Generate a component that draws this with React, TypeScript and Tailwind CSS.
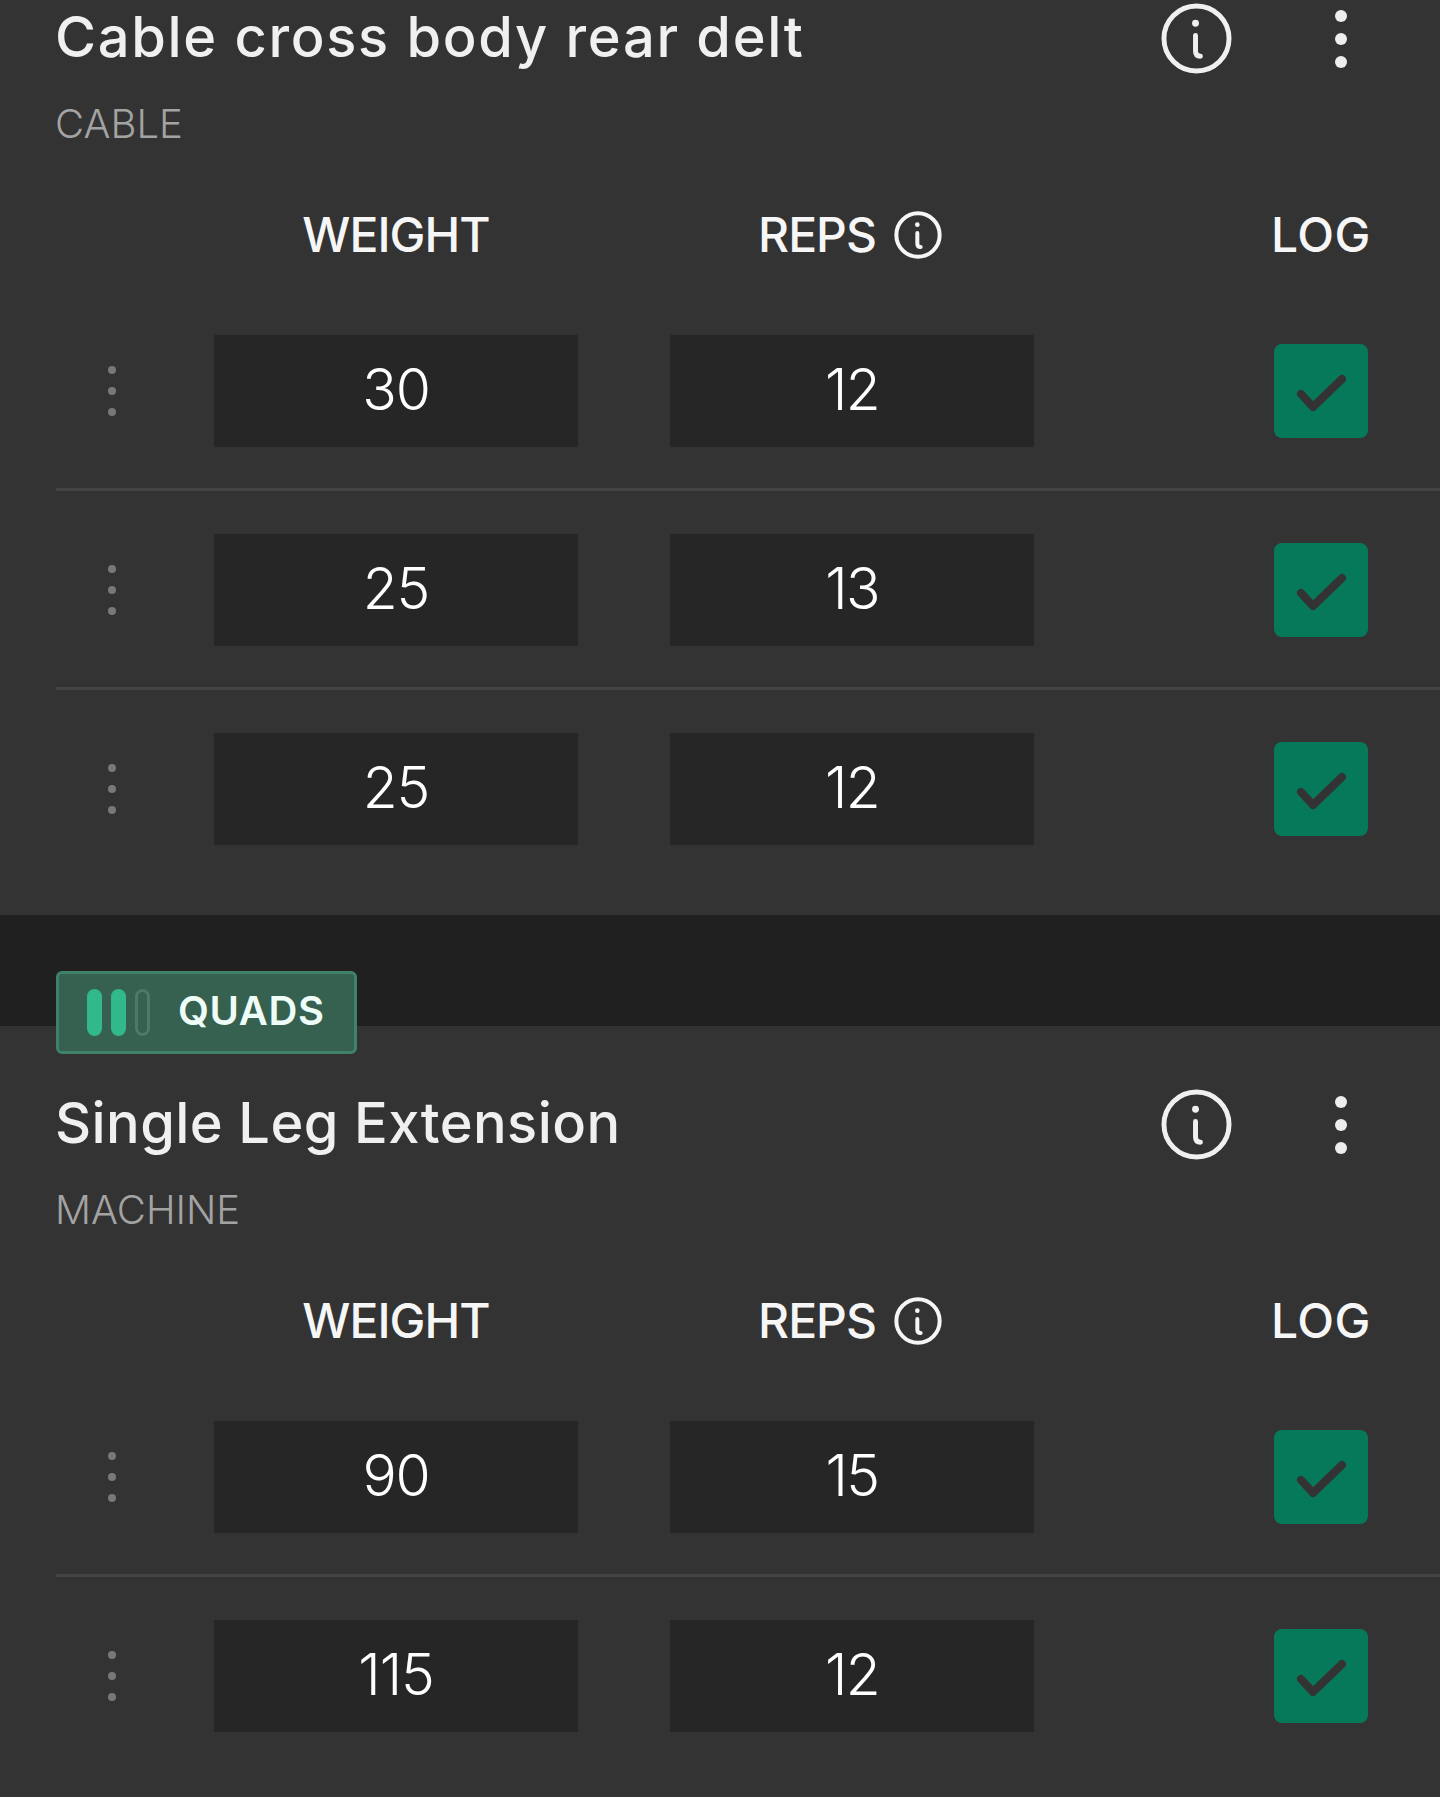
const FONT = "font-['Inter','Liberation_Sans',sans-serif]"

const EXERCISES = [
  {
    title: "Cable cross body rear delt",
    titleClass: "tracking-[0.03em]",
    kind: "CABLE",
    sets: [
      { weight: "30", reps: "12" },
      { weight: "25", reps: "13" },
      { weight: "25", reps: "12" },
    ],
  },
  {
    title: "Single Leg Extension",
    titleClass: "tracking-[0.007em]",
    kind: "MACHINE",
    muscle: "QUADS",
    sets: [
      { weight: "90", reps: "15" },
      { weight: "115", reps: "12" },
    ],
  },
]

function InfoIcon({ className, stroke }: { className: string; stroke: number }) {
  return (
    <svg className={className} viewBox="0 0 72 72" fill="none" stroke="currentColor" strokeLinecap="round">
      <circle cx="36" cy="36" r={36 - stroke / 2 - 0.5} strokeWidth={stroke} />
      <circle cx="35" cy="20.5" r="3.5" fill="currentColor" stroke="none" />
      <path d="M35 33V49Q35 54 40 54" strokeWidth={stroke} />
    </svg>
  )
}

function DragDots() {
  return (
    <div className="ml-[52px] flex flex-col gap-[13px]">
      <span className="w-[8px] h-[8px] rounded-full bg-[#787878]" />
      <span className="w-[8px] h-[8px] rounded-full bg-[#787878]" />
      <span className="w-[8px] h-[8px] rounded-full bg-[#787878]" />
    </div>
  )
}

function SetRow({ weight, reps, last }: { weight: string; reps: string; last: boolean }) {
  return (
    <div className={`ml-[56px] flex items-center pt-[43px] ${last ? "pb-[43px]" : "pb-[41px] border-b-[3px] border-[#444444]"}`}>
      <div className="w-[158px]">
        <DragDots />
      </div>
      <div className="w-[364px] h-[112px] pb-[2px] bg-[#262626] flex items-center justify-center text-[57px] font-[350] text-white tracking-[-0.02em]">
        {weight}
      </div>
      <div className="ml-[92px] w-[364px] h-[112px] pb-[2px] bg-[#262626] flex items-center justify-center text-[57px] font-[350] text-white tracking-[-0.03em]">
        {reps}
      </div>
      <div className="ml-auto mr-[72px] w-[94px] h-[94px] rounded-[8px] bg-[#07795b]">
        <svg className="w-[94px] h-[94px]" viewBox="0 0 94 94" fill="none" stroke="#333333" strokeWidth="8" strokeLinecap="round" strokeLinejoin="round">
          <path d="M27 50L39 63L68 35" />
        </svg>
      </div>
    </div>
  )
}

export default function App() {
  return (
    <div className={`h-[1797px] overflow-hidden bg-[#202020] ${FONT}`}>
      {/* Exercises */}
      <div className="-mt-[61px] flex flex-col gap-[111px]">
        {EXERCISES.map((ex, i) => (
          <section key={ex.title} className={`relative bg-[#333333] ${i === 0 ? "pt-[64px] pb-[27px]" : "pt-[63px] pb-[64px]"}`}>
            {ex.muscle && (
              <div className="absolute left-[56px] -top-[55px] w-[301px] h-[83px] rounded-[6px] border-[3px] border-[#3f8269] bg-[#36604f] flex items-center pl-[28px]">
                <div className="flex gap-[9px]">
                  <span className="w-[15px] h-[47px] rounded-full bg-[#31b88b]" />
                  <span className="w-[15px] h-[47px] rounded-full bg-[#31b88b]" />
                  <span className="w-[15px] h-[47px] rounded-full border-[3px] border-[#4a7a69]" />
                </div>
                <span className="ml-[28px] pb-[3px] text-[40px] font-semibold text-[#eefdf8] tracking-[0.015em]">{ex.muscle}</span>
              </div>
            )}

            {/* Title row */}
            <div className="h-[71px] flex items-center pl-[56px]">
              <h2 className={`-ml-[1px] pb-[4px] text-[56px] font-medium text-[#f0f0f0] whitespace-nowrap ${ex.titleClass}`}>{ex.title}</h2>
              <InfoIcon className="ml-auto w-[71px] h-[71px] text-[#f0f0f0]" stroke={5} />
              <div className="ml-[103px] mr-[93px] flex flex-col gap-[11px]">
                <span className="w-[12px] h-[12px] rounded-full bg-[#eeeeee]" />
                <span className="w-[12px] h-[12px] rounded-full bg-[#eeeeee]" />
                <span className="w-[12px] h-[12px] rounded-full bg-[#eeeeee]" />
              </div>
            </div>
            <p className="mt-[21px] h-[58px] leading-[58px] pl-[55px] text-[40px] font-light text-[#a3a3a3]">{ex.kind}</p>

            {/* Column headers */}
            <div className="mt-[52px] mb-[27px] ml-[56px] h-[60px] flex items-center text-[48px] font-medium text-[#f6f6f6] tracking-[-0.02em]">
              <div className="ml-[158px] w-[364px] text-center">WEIGHT</div>
              <div className="ml-[92px] w-[364px] pr-[4px] flex items-center justify-center gap-[18px]">
                REPS
                <InfoIcon className="w-[48px] h-[48px]" stroke={6} />
              </div>
              <div className="ml-auto mr-[72px] w-[94px] flex justify-center whitespace-nowrap tracking-[0.01em]">LOG</div>
            </div>

            {ex.sets.map((set, j) => (
              <SetRow key={j} weight={set.weight} reps={set.reps} last={j === ex.sets.length - 1} />
            ))}
          </section>
        ))}
      </div>
    </div>
  )
}
